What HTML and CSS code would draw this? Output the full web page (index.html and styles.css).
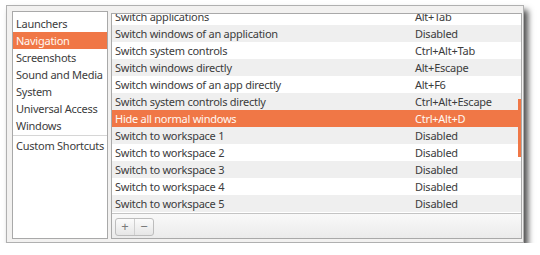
FILE: index.html
```html
<!DOCTYPE html>
<html>
<head>
<meta charset="utf-8">
<link rel="stylesheet" href="styles.css">
</head>
<body>
<div class="screen">
  <div class="window">
    <div class="side">
      <div class="side-item">Launchers</div>
      <div class="side-item selected">Navigation</div>
      <div class="side-item">Screenshots</div>
      <div class="side-item">Sound and Media</div>
      <div class="side-item">System</div>
      <div class="side-item">Universal Access</div>
      <div class="side-item">Windows</div>
      <div class="side-sep"></div>
      <div class="side-item">Custom Shortcuts</div>
    </div>
    <div class="main">
      <div class="list">
        <div class="rows">
          <div class="row"><span>Switch applications</span><span>Alt+Tab</span></div>
          <div class="row alt"><span>Switch windows of an application</span><span>Disabled</span></div>
          <div class="row"><span>Switch system controls</span><span>Ctrl+Alt+Tab</span></div>
          <div class="row alt"><span>Switch windows directly</span><span>Alt+Escape</span></div>
          <div class="row"><span>Switch windows of an app directly</span><span>Alt+F6</span></div>
          <div class="row alt"><span>Switch system controls directly</span><span>Ctrl+Alt+Escape</span></div>
          <div class="row selected"><span>Hide all normal windows</span><span>Ctrl+Alt+D</span></div>
          <div class="row alt"><span>Switch to workspace 1</span><span>Disabled</span></div>
          <div class="row"><span>Switch to workspace 2</span><span>Disabled</span></div>
          <div class="row alt"><span>Switch to workspace 3</span><span>Disabled</span></div>
          <div class="row"><span>Switch to workspace 4</span><span>Disabled</span></div>
          <div class="row alt"><span>Switch to workspace 5</span><span>Disabled</span></div>
        </div>
        <div class="scroll"></div>
      </div>
      <div class="toolbar">
        <div class="btns">
          <div class="btn">+</div>
          <div class="btn">−</div>
        </div>
      </div>
    </div>
  </div>
</div>
</body>
</html>
```

FILE: styles.css
```css
html, body {
  margin: 0;
  padding: 0;
  background: #ffffff;
}
body {
  font-family: "Noto Sans", "DejaVu Sans", sans-serif;
  font-size: 11px;
  letter-spacing: -0.25px;
  color: #3c3c3c;
}
.screen {
  padding: 5px 0 0 6px;
}
.window {
  box-sizing: border-box;
  width: 518px;
  height: 238px;
  border: 1px solid #b0b0b0;
  background: #f2f1f0;
  box-shadow: 4px 5px 6px rgba(0, 0, 0, 0.7);
  display: flex;
  gap: 3px;
  padding: 5px 1px 3px 5px;
}
.side {
  box-sizing: border-box;
  width: 96px;
  height: 228px;
  border: 1px solid #a9a9a9;
  background: #ffffff;
  padding-top: 3px;
  display: flex;
  flex-direction: column;
}
.side-item {
  height: 17px;
  line-height: 17px;
  padding-left: 3px;
  white-space: nowrap;
}
.side-item.selected {
  background: #f07746;
  color: #fff8f2;
}
.side-sep {
  height: 1px;
  margin: 1px 0 1px 0;
  background: #d6d6d6;
}
.main {
  box-sizing: border-box;
  width: 411px;
  height: 226px;
  margin-top: 2px;
  border: 1px solid #a9a9a9;
  background: #ffffff;
  display: flex;
  flex-direction: column;
}
.list {
  position: relative;
  height: 199px;
  overflow: hidden;
}
.rows {
  margin-top: -6px;
}
.row {
  display: grid;
  grid-template-columns: 300px 1fr;
  height: 17px;
  line-height: 17px;
  padding-left: 3px;
  white-space: nowrap;
  background: #ffffff;
}
.row.alt {
  background: #efefef;
}
.row.selected {
  background: #f07746;
  color: #fff8f2;
}
.scroll {
  position: absolute;
  left: 406px;
  top: 85px;
  width: 3px;
  height: 58px;
  background: #f07746;
}
.toolbar {
  flex: 1;
  border-top: 1px solid #c4c4c4;
  background: linear-gradient(#f9f9f9, #ebebeb);
  display: flex;
  align-items: flex-start;
  padding: 4px 0 0 3px;
}
.btns {
  display: flex;
  height: 16px;
  border: 1px solid #bdbdbd;
  border-radius: 3px;
  background: linear-gradient(#fbfbfb, #e6e6e6);
}
.btn {
  width: 18px;
  height: 16px;
  line-height: 15px;
  text-align: center;
  color: #7a7a7a;
  font-size: 13px;
  letter-spacing: 0;
}
.btn + .btn {
  border-left: 1px solid #cfcfcf;
}
```
